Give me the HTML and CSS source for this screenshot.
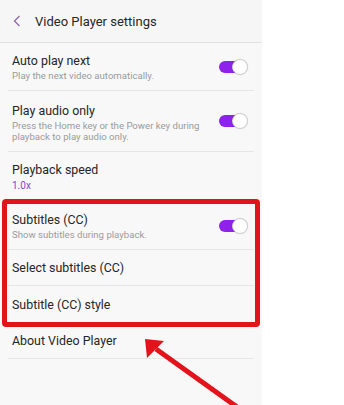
FILE: index.html
```html
<!DOCTYPE html>
<html>
<head>
<meta charset="utf-8">
<link rel="stylesheet" href="styles.css">
</head>
<body>
<div class="page">
  <div class="screen">
    <div class="header">
      <svg class="back" width="8" height="12" viewBox="0 0 8 12"><path d="M6.5 1 L1.5 6 L6.5 11" fill="none" stroke="#8d6ba9" stroke-width="1.3"/></svg>
      <span class="htitle">Video Player settings</span>
    </div>
    <div class="row r1">
      <div class="texts">
        <div class="title">Auto play next</div>
        <div class="sub">Play the next video automatically.</div>
      </div>
      <div class="toggle"><span class="thumb"></span></div>
    </div>
    <div class="row r2">
      <div class="texts">
        <div class="title">Play audio only</div>
        <div class="sub">Press the Home key or the Power key during<br>playback to play audio only.</div>
      </div>
      <div class="toggle"><span class="thumb"></span></div>
    </div>
    <div class="row r3">
      <div class="texts">
        <div class="title">Playback speed</div>
        <div class="value">1.0x</div>
      </div>
    </div>
    <div class="row r4">
      <div class="texts">
        <div class="title">Subtitles (CC)</div>
        <div class="sub">Show subtitles during playback.</div>
      </div>
      <div class="toggle"><span class="thumb"></span></div>
    </div>
    <div class="row r5">
      <div class="texts"><div class="title">Select subtitles (CC)</div></div>
    </div>
    <div class="row r6">
      <div class="texts"><div class="title">Subtitle (CC) style</div></div>
    </div>
    <div class="row r7">
      <div class="texts"><div class="title">About Video Player</div></div>
    </div>
  </div>
  <div class="highlight"></div>
  <svg class="arrow" width="344" height="405" viewBox="0 0 344 405">
    <line x1="156" y1="349" x2="244" y2="412" stroke="#e3131b" stroke-width="5"/>
    <polygon points="145,339 164,341 147,358" fill="#e3131b"/>
  </svg>
</div>
</body>
</html>
```
FILE: styles.css
```css
* { box-sizing: border-box; }
html, body { margin: 0; padding: 0; background: #fff; }
body { font-family: Roboto, "Noto Sans", sans-serif; }
.page { position: relative; width: 344px; height: 405px; overflow: hidden; }
.screen {
  width: 262px; height: 405px; background: #f8f8f8;
  display: flex; flex-direction: column;
}
.header {
  height: 43px; display: flex; align-items: center;
  border-bottom: 1px solid #e2e2e2; background: #f6f6f6;
  padding-left: 13px; padding-bottom: 0;
}
.back { margin-right: 14px; }
.htitle { font-size: 13px; color: #262626; }
.row {
  display: flex; align-items: center; justify-content: space-between;
  margin: 0 8px; padding: 0 5px 0 4px;
  border-bottom: 1px solid #e6e6e6;
}
.r1 { height: 48px; }
.r2 { height: 61px; }
.r3 { height: 51px; }
.r4 { height: 47px; }
.r5 { height: 36px; }
.r6 { height: 38px; }
.r7 { height: 35px; }
.title { font-size: 12.4px; line-height: 16px; color: #262626; }
.sub { font-size: 9.6px; line-height: 11px; color: #9b9b9b; margin-top: 1px; }
.value { font-size: 10px; line-height: 12px; color: #8a3fd1; margin-top: 2px; }
.r2 .texts { margin-top: 2px; }
.toggle {
  position: relative; width: 28px; height: 12px; border-radius: 6px;
  background: #8e22ea; margin-right: 2px;
}
.thumb {
  position: absolute; right: -1px; top: -2px; width: 16px; height: 16px;
  border-radius: 50%; background: #fff; border: 1px solid #cfcfcf;
  box-shadow: 0 0 1px rgba(0,0,0,0.15);
}
.highlight {
  position: absolute; left: 2px; top: 199px; width: 258px; height: 128px;
  border: 5px solid #e3131b; border-radius: 4px;
}
.arrow { position: absolute; left: 0; top: 0; }
```
